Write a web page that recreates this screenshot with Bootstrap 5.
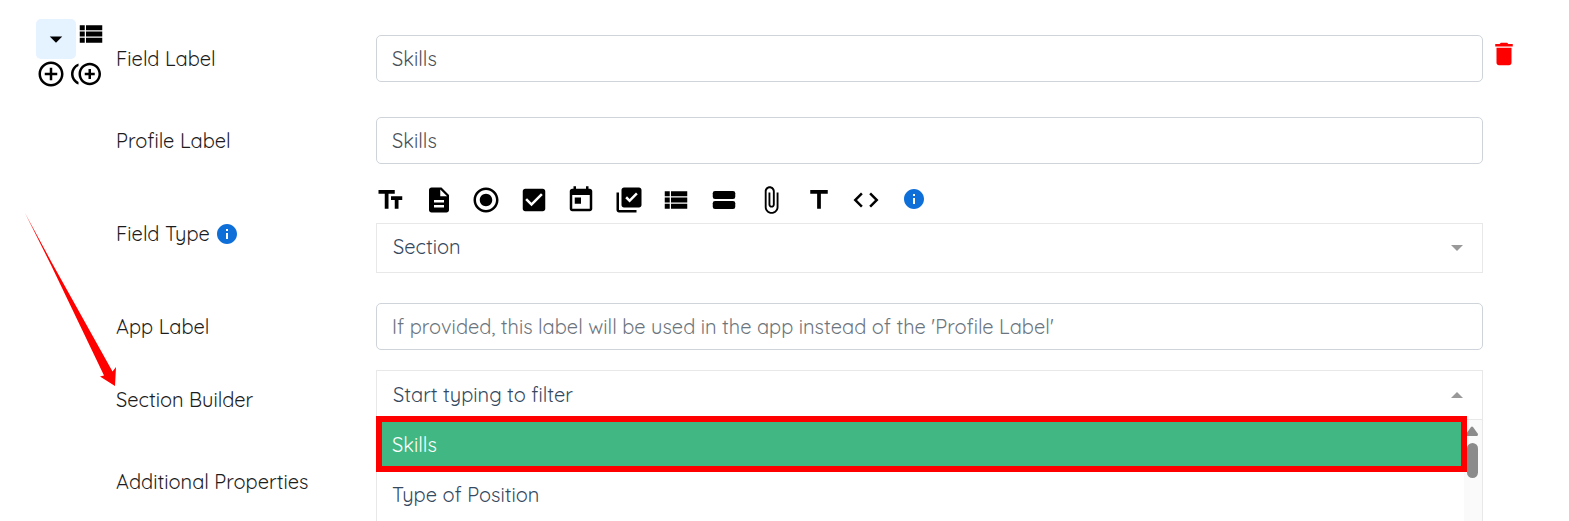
<!DOCTYPE html>
<html lang="en">
<head>
<meta charset="utf-8">
<meta name="viewport" content="width=device-width, initial-scale=1">
<title>Form field editor</title>
<link href="https://cdn.jsdelivr.net/npm/bootstrap@5.3.0/dist/css/bootstrap.min.css" rel="stylesheet">
<style>
  body { font-family: Quicksand, Lato, "Open Sans", sans-serif; font-size: 20px; line-height: 30px; color: #1c1c1c; background: #fff; overflow-y: hidden; }
  .editor { padding: 19px 0 0 36px; }
  .field-row { display: grid; grid-template-columns: 80px 260px minmax(0, 1fr) 86px; align-items: center; }
  .field-row > .field-name { grid-column: 2; }
  .field-row > .field-control { grid-column: 3; }
  .row-head { align-items: start; margin-bottom: 28px; }
  .row-head > .field-name, .row-head > .field-control { margin-top: 16px; }
  .row-head > .field-name { line-height: 47px; }
  .row-profile { margin-bottom: 21px; }
  .row-type { margin-bottom: 30px; }
  .row-app { margin-bottom: 20px; }
  .row-section { margin-bottom: 47px; }
  .name-low { padding-top: 10px; }
  .glyph { width: 30px; height: 30px; fill: #000; display: block; }
  .icon-btn { border: 0; padding: 0; background: none; display: block; }
  .tool-pair { gap: 5px; }
  .toggle-btn { width: 40px; height: 40px; padding: 5px; background: #e5f2ff; border-radius: 5px; }
  .info-btn .glyph { width: 24px; height: 24px; fill: #0f6fd9; }
  .delete-btn { margin: 20px 0 0 6px; }
  .delete-btn .glyph { fill: #f00; }
  .form-control { height: 47px; font-size: 20px; line-height: 30px; padding: 0 15px; border-color: #ced4da; border-radius: 5px; color: #495057; }
  .form-control::placeholder { color: #6c757d; opacity: 1; }
  .type-bar { width: 505px; }
  .type-info { margin-left: 21px; padding-bottom: 2px; }
  .type-name { gap: 5px; }
  .pick { height: 50px; font-size: 20px; line-height: 30px; padding: 0 16px 2px; border: 1px solid #e8e8e8; border-radius: 0; color: #35495e;
    background: #fff url("data:image/svg+xml,%3Csvg xmlns='http://www.w3.org/2000/svg' viewBox='0 0 12 6'%3E%3Cpath fill='%23999' d='M0 0h12L6 6z'/%3E%3C/svg%3E") no-repeat right 19px center / 12px 6px; }
  .pick-open { background-image: url("data:image/svg+xml,%3Csvg xmlns='http://www.w3.org/2000/svg' viewBox='0 0 12 6'%3E%3Cpath fill='%23999' d='M0 6h12L6 0z'/%3E%3C/svg%3E"); }
  .pick::placeholder { color: #35495e; }
  .choices { top: 100%; left: 0; right: 0; background: #fff; border: 1px solid #e8e8e8; border-width: 0 1px; padding: 0 18px 5px 0; z-index: 2; }
  .choice { display: block; width: 100%; height: 50px; padding: 0 15px; border: 0; text-align: left; color: #35495e; background: #fff; }
  .choice.active { background: #41b883; color: #fff; }
  .scroll-track { top: 0; right: 0; bottom: 0; width: 18px; padding: 6px 4px 0 0; background: #fafafa; }
  .scroll-up { width: 12px; height: 10px; fill: #8b8b8b; display: block; margin-left: auto; }
  .scroll-thumb { width: 11px; height: 35px; margin: 7px 0 0 auto; border-radius: 6px; background: #8b8b8b; }
  .callout-frame { top: -4px; left: -1px; right: 15px; height: 56px; border: 6px solid #f00; pointer-events: none; }
  .callout-arrow { left: 25px; top: 213px; width: 92px; height: 174px; fill: #f00; pointer-events: none; }
</style>
</head>
<body>
<svg class="d-none" aria-hidden="true">
  <symbol id="i-list" viewBox="0 0 24 24"><path d="M3 14h4v-4H3v4zm0 5h4v-4H3v4zM3 9h4V5H3v4zm5 5h13v-4H8v4zm0 5h13v-4H8v4zM8 5v4h13V5H8z"/></symbol>
  <symbol id="i-info" viewBox="0 0 24 24"><path d="M12 2C6.48 2 2 6.48 2 12s4.48 10 10 10 10-4.48 10-10S17.52 2 12 2zm1 15h-2v-6h2v6zm0-8h-2V7h2v2z"/></symbol>
</svg>
<main class="position-relative min-vh-100 overflow-hidden">
<form class="editor">
  <div class="field-row row-head">
    <div>
      <div class="d-flex align-items-start">
        <button type="button" class="icon-btn toggle-btn" aria-label="Collapse"><svg class="glyph" viewBox="0 0 24 24"><path d="M7 10l5 5 5-5z"/></svg></button>
        <button type="button" class="icon-btn" aria-label="Section"><svg class="glyph"><use href="#i-list"/></svg></button>
      </div>
      <div class="d-flex tool-pair">
        <button type="button" class="icon-btn" aria-label="Add field"><svg class="glyph" viewBox="0 0 24 24"><path d="M13 7h-2v4H7v2h4v4h2v-4h4v-2h-4V7zm-1-5C6.48 2 2 6.48 2 12s4.48 10 10 10 10-4.48 10-10S17.52 2 12 2zm0 18c-4.41 0-8-3.59-8-8s3.59-8 8-8 8 3.59 8 8-3.59 8-8 8z"/></svg></button>
        <button type="button" class="icon-btn" aria-label="Duplicate field"><svg class="glyph" viewBox="0 0 24 24"><path d="M16 8h-2v3h-3v2h3v3h2v-3h3v-2h-3zM2 12c0-2.79 1.64-5.2 4.01-6.32V3.52C2.52 4.76 0 8.09 0 12s2.52 7.24 6.01 8.48v-2.16C3.64 17.2 2 14.79 2 12zm13-9c-4.96 0-9 4.04-9 9s4.04 9 9 9 9-4.04 9-9-4.04-9-9-9zm0 16c-3.86 0-7-3.14-7-7s3.14-7 7-7 7 3.14 7 7-3.14 7-7 7z"/></svg></button>
      </div>
    </div>
    <label class="field-name" for="fieldLabel">Field Label</label>
    <div class="field-control"><input id="fieldLabel" type="text" class="form-control" value="Skills"></div>
    <button type="button" class="icon-btn delete-btn" aria-label="Delete field"><svg class="glyph" viewBox="0 0 24 24"><path d="M6 19c0 1.1.9 2 2 2h8c1.1 0 2-.9 2-2V7H6v12zM19 4h-3.5l-1-1h-5l-1 1H5v2h14V4z"/></svg></button>
  </div>

  <div class="field-row row-profile">
    <label class="field-name" for="profileLabel">Profile Label</label>
    <div class="field-control"><input id="profileLabel" type="text" class="form-control" value="Skills"></div>
  </div>

  <div class="field-row row-type">
    <div class="field-name name-low type-name d-flex align-items-center">
      <label for="fieldType">Field Type</label>
      <button type="button" class="icon-btn info-btn" aria-label="About field types"><svg class="glyph"><use href="#i-info"/></svg></button>
    </div>
    <div class="field-control">
      <div class="d-flex align-items-center mb-2">
        <div class="type-bar d-flex justify-content-between">
          <button type="button" class="icon-btn" aria-label="Text"><svg class="glyph" viewBox="0 0 24 24"><path d="M2 4v3h5v12h3V7h5V4H2zm19 5h-9v3h3v7h3v-7h3V9z"/></svg></button>
          <button type="button" class="icon-btn" aria-label="Text area"><svg class="glyph" viewBox="0 0 24 24"><path d="M14 2H6c-1.1 0-1.99.9-1.99 2L4 20c0 1.1.89 2 1.99 2H18c1.1 0 2-.9 2-2V8l-6-6zm2 16H8v-2h8v2zm0-4H8v-2h8v2zm-3-5V3.5L18.5 9H13z"/></svg></button>
          <button type="button" class="icon-btn" aria-label="Radio"><svg class="glyph" viewBox="0 0 24 24"><path d="M12 7c-2.76 0-5 2.24-5 5s2.24 5 5 5 5-2.24 5-5-2.24-5-5-5zm0-5C6.48 2 2 6.48 2 12s4.48 10 10 10 10-4.48 10-10S17.52 2 12 2zm0 18c-4.42 0-8-3.58-8-8s3.58-8 8-8 8 3.58 8 8-3.58 8-8 8z"/></svg></button>
          <button type="button" class="icon-btn" aria-label="Checkbox"><svg class="glyph" viewBox="0 0 24 24"><path d="M19 3H5c-1.11 0-2 .9-2 2v14c0 1.1.89 2 2 2h14c1.11 0 2-.9 2-2V5c0-1.1-.89-2-2-2zm-9 14l-5-5 1.41-1.41L10 14.17l7.59-7.59L19 8l-9 9z"/></svg></button>
          <button type="button" class="icon-btn" aria-label="Date"><svg class="glyph" viewBox="0 0 24 24"><path d="M19 3h-1V1h-2v2H8V1H6v2H5c-1.11 0-1.99.9-1.99 2L3 19c0 1.1.89 2 2 2h14c1.1 0 2-.9 2-2V5c0-1.1-.9-2-2-2zm0 16H5V8h14v11zM7 10h5v5H7z"/></svg></button>
          <button type="button" class="icon-btn" aria-label="Multiple choice"><svg class="glyph" viewBox="0 0 24 24"><path d="M20 2H8c-1.1 0-2 .9-2 2v12c0 1.1.9 2 2 2h12c1.1 0 2-.9 2-2V4c0-1.1-.9-2-2-2zm-7.53 12L9 10.5l1.4-1.41 2.07 2.08L17.6 6 19 7.41 12.47 14zM4 6H2v14c0 1.1.9 2 2 2h14v-2H4V6z"/></svg></button>
          <button type="button" class="icon-btn" aria-label="Section"><svg class="glyph"><use href="#i-list"/></svg></button>
          <button type="button" class="icon-btn" aria-label="Group"><svg class="glyph" viewBox="0 0 24 24"><rect x="3" y="4.800" width="18" height="6.400" rx="1.800"/><rect x="3" y="12.800" width="18" height="6.400" rx="1.800"/></svg></button>
          <button type="button" class="icon-btn" aria-label="Attachment"><svg class="glyph" viewBox="0 0 24 24"><path d="M16.5 6v11.5c0 2.21-1.79 4-4 4s-4-1.79-4-4V5c0-1.38 1.12-2.5 2.5-2.5s2.5 1.12 2.5 2.5v10.5c0 .55-.45 1-1 1s-1-.45-1-1V6H10v9.5c0 1.38 1.12 2.5 2.5 2.5s2.5-1.12 2.5-2.5V5c0-2.21-1.79-4-4-4S7 2.79 7 5v12.5c0 3.04 2.46 5.5 5.5 5.5s5.5-2.46 5.5-5.5V6h-1.5z"/></svg></button>
          <button type="button" class="icon-btn" aria-label="Title"><svg class="glyph" viewBox="0 0 24 24"><path d="M5 4v3h5.5v12h3V7H19V4z"/></svg></button>
          <button type="button" class="icon-btn" aria-label="Code"><svg class="glyph" viewBox="0 0 24 24"><path d="M9.4 16.6L4.8 12l4.6-4.6L8 6l-6 6 6 6 1.4-1.4zm5.2 0l4.6-4.6-4.6-4.6L16 6l6 6-6 6-1.4-1.4z"/></svg></button>
        </div>
        <button type="button" class="icon-btn info-btn type-info" aria-label="About the icons"><svg class="glyph"><use href="#i-info"/></svg></button>
      </div>
      <select id="fieldType" class="form-select pick"><option selected>Section</option></select>
    </div>
  </div>

  <div class="field-row row-app">
    <label class="field-name" for="appLabel">App Label</label>
    <div class="field-control"><input id="appLabel" type="text" class="form-control" placeholder="If provided, this label will be used in the app instead of the 'Profile Label'"></div>
  </div>

  <div class="field-row row-section">
    <label class="field-name name-low" for="sectionBuilder">Section Builder</label>
    <div class="field-control position-relative">
      <input id="sectionBuilder" type="text" class="form-control pick pick-open" role="combobox" aria-expanded="true" aria-controls="sectionChoices" placeholder="Start typing to filter">
      <div id="sectionChoices" class="choices position-absolute" role="listbox">
        <button type="button" class="choice active" role="option" aria-selected="true">Skills</button>
        <button type="button" class="choice" role="option" aria-selected="false">Type of Position</button>
        <div class="scroll-track position-absolute" aria-hidden="true">
          <svg class="scroll-up" viewBox="0 0 12 10"><path d="M5 1Q6 0 7 1L12 8Q12 10 11 10H1Q0 10 0 8z"/></svg>
          <div class="scroll-thumb"></div>
        </div>
        <div class="callout-frame position-absolute"></div>
      </div>
    </div>
  </div>

  <div class="field-row">
    <div class="field-name">Additional Properties</div>
  </div>
</form>
<svg class="callout-arrow position-absolute" viewBox="0 0 92 174" aria-hidden="true"><path d="M0 0L27 50L87.5 158.5L91 154L90 173L75 163.5L79 162.5L26 52z"/></svg>
</main>
<script src="https://cdn.jsdelivr.net/npm/bootstrap@5.3.0/dist/js/bootstrap.bundle.min.js"></script>
</body>
</html>
